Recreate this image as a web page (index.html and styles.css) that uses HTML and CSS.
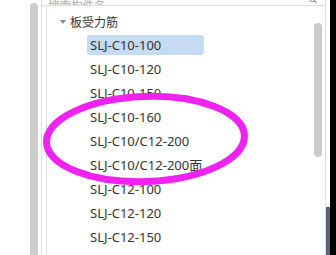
FILE: index.html
```html
<!DOCTYPE html>
<html>
<head>
<meta charset="utf-8">
<link rel="stylesheet" href="styles.css">
</head>
<body>
<div class="page">
  <div class="gutter"></div>
  <div class="left-scroll"></div>
  <div class="panel">
    <div class="search">
      <span class="placeholder">搜索构件名</span>
      <svg class="search-icon" width="8" height="10" viewBox="0 0 8 10"><circle cx="3.5" cy="3" r="2.6" fill="none" stroke="#999" stroke-width="1.2"/><line x1="5.4" y1="5" x2="7.5" y2="7" stroke="#999" stroke-width="1.3"/></svg>
    </div>
    <div class="tree-box">
      <div class="tree">
        <div class="node-head"><span class="caret"></span><span class="head-text">板受力筋</span></div>
        <div class="leaf"><span class="leaf-label selected">SLJ-C10-100</span></div>
        <div class="leaf"><span class="leaf-label">SLJ-C10-120</span></div>
        <div class="leaf"><span class="leaf-label">SLJ-C10-150</span></div>
        <div class="leaf"><span class="leaf-label">SLJ-C10-160</span></div>
        <div class="leaf"><span class="leaf-label">SLJ-C10/C12-200</span></div>
        <div class="leaf"><span class="leaf-label">SLJ-C10/C12-200面</span></div>
        <div class="leaf"><span class="leaf-label">SLJ-C12-100</span></div>
        <div class="leaf"><span class="leaf-label">SLJ-C12-120</span></div>
        <div class="leaf"><span class="leaf-label">SLJ-C12-150</span></div>
      </div>
      <div class="vscroll"><div class="thumb"></div></div>
    </div>
  </div>
  <div class="edge">
    <div class="edge-bar"></div>
  </div>
  <div class="black"></div>
</div>
<svg class="annot" width="220" height="110" viewBox="0 0 220 110"><ellipse cx="110.5" cy="54" rx="99" ry="42.5" fill="none" stroke="#f022f0" stroke-width="7" transform="rotate(-2 110.5 54)"/></svg>
</body>
</html>
```

FILE: styles.css
```css
html, body {
  margin: 0;
  padding: 0;
  background: #ffffff;
}
body {
  width: 336px;
  height: 255px;
  overflow: hidden;
  position: relative;
  font-family: "Noto Sans", "Noto Sans CJK SC", sans-serif;
  color: #333333;
}
.page {
  display: flex;
  height: 255px;
}
.gutter {
  width: 30px;
  flex: none;
}
.left-scroll {
  width: 8px;
  flex: none;
  margin-top: 3px;
  background: #cdcdcd;
  border-radius: 4px 4px 0 0;
  margin-right: 3px;
}
.panel {
  width: 284px;
  flex: none;
  border-left: 1px solid #dedede;
  display: flex;
  flex-direction: column;
}
.search {
  height: 5px;
  border-bottom: 1px solid #dedede;
  border-right: 1px solid #dedede;
  display: flex;
  align-items: flex-end;
  justify-content: space-between;
  overflow: hidden;
  padding-left: 6px;
  padding-right: 8px;
}
.placeholder {
  font-size: 11.5px;
  line-height: 12px;
  color: #a8a8a8;
  margin-bottom: -6px;
  font-family: "Noto Sans CJK SC", sans-serif;
}
.search-icon {
  margin-bottom: -1px;
}
.tree-box {
  flex: 1;
  margin-left: 4px;
  border-left: 1px solid #dedede;
  border-right: 1px solid #dedede;
  display: flex;
  overflow: hidden;
}
.tree {
  flex: 1;
  padding-top: 3px;
}
.node-head {
  height: 24px;
  display: flex;
  align-items: center;
  padding-left: 13px;
}
.caret {
  width: 0;
  height: 0;
  border-left: 3px solid transparent;
  border-right: 3px solid transparent;
  border-top: 4px solid #8a8a8a;
  margin-right: 4px;
  margin-top: 1px;
}
.head-text {
  font-family: "Noto Sans CJK SC", sans-serif;
  font-size: 12px;
  color: #333333;
}
.leaf {
  height: 24px;
  display: flex;
  align-items: center;
  padding-left: 40px;
}
.leaf-label {
  font-size: 13px;
  line-height: 20px;
  height: 20px;
  padding-left: 3px;
  width: 114px;
  border-radius: 3px;
  white-space: nowrap;
  color: #333333;
}
.leaf-label.selected {
  background: #c5dbf1;
}
.vscroll {
  width: 8px;
  flex: none;
  margin-right: 3px;
  padding-top: 17px;
}
.thumb {
  height: 134px;
  background: #cbcbcb;
  border-radius: 4px;
}
.edge {
  width: 4px;
  flex: none;
  display: flex;
  flex-direction: column;
  justify-content: flex-end;
}
.edge-bar {
  height: 48px;
  background: #5c6670;
}
.black {
  flex: 1;
  background: #000000;
}
.annot {
  position: absolute;
  left: 35px;
  top: 85px;
}
```
